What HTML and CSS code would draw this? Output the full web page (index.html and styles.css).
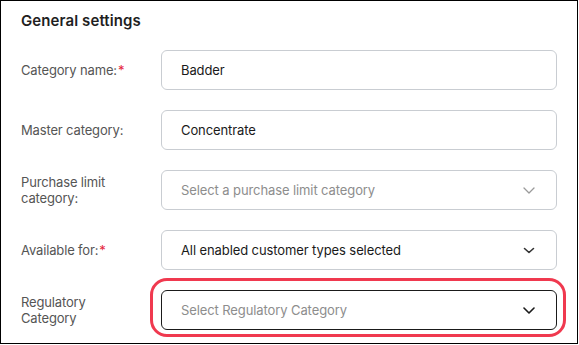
FILE: index.html
```html
<!DOCTYPE html>
<html>
<head>
<meta charset="utf-8">
<link rel="stylesheet" href="styles.css">
</head>
<body>
<div class="panel">
  <h2 class="title">General settings</h2>
  <div class="form">
    <div class="row">
      <label class="label">Category name:<span class="req">*</span></label>
      <div class="field"><span class="value">Badder</span></div>
    </div>
    <div class="row">
      <label class="label">Master category:</label>
      <div class="field"><span class="value">Concentrate</span></div>
    </div>
    <div class="row">
      <label class="label">Purchase limit category:</label>
      <div class="field select"><span class="placeholder">Select a purchase limit category</span>
        <svg class="chev light" width="12" height="7" viewBox="0 0 12 7"><path d="M1 1l5 5 5-5" fill="none" stroke="currentColor" stroke-width="1.3" stroke-linecap="round" stroke-linejoin="round"/></svg>
      </div>
    </div>
    <div class="row">
      <label class="label">Available for:<span class="req">*</span></label>
      <div class="field select"><span class="value">All enabled customer types selected</span>
        <svg class="chev mid" width="12" height="7" viewBox="0 0 12 7"><path d="M1.5 1.5l4.5 4 4.5-4" fill="none" stroke="currentColor" stroke-width="1.6" stroke-linecap="round" stroke-linejoin="round"/></svg>
      </div>
    </div>
    <div class="row">
      <label class="label">Regulatory Category</label>
      <div class="field select active"><span class="placeholder">Select Regulatory Category</span>
        <svg class="chev dark" width="12" height="7" viewBox="0 0 12 7"><path d="M1 1l5 5 5-5" fill="none" stroke="currentColor" stroke-width="1.6" stroke-linecap="round" stroke-linejoin="round"/></svg>
        <span class="highlight"></span>
      </div>
    </div>
  </div>
</div>
</body>
</html>
```
FILE: styles.css
```css
html, body {
  margin: 0;
  padding: 0;
  background: #fff;
}
body {
  font-family: Inter, "Noto Sans", sans-serif;
  color: #1a1a1a;
}
.panel {
  width: 578px;
  height: 344px;
  box-sizing: border-box;
  border: 1px solid #000;
  padding: 10px 20px 0 20px;
  overflow: hidden;
}
.title {
  margin: 0;
  font-size: 15px;
  line-height: 20px;
  font-weight: 600;
  color: #1f1f1f;
  letter-spacing: 0.1px;
}
.form {
  margin-top: 19px;
  display: flex;
  flex-direction: column;
  gap: 20px;
}
.row {
  display: flex;
  align-items: center;
  height: 40px;
}
.label {
  width: 115px;
  flex: none;
  margin-right: 25px;
  font-size: 13px;
  line-height: 16px;
  color: #555;
  letter-spacing: -0.15px;
}
.req {
  color: #e5243b;
  margin-left: 1px;
}
.field {
  position: relative;
  flex: 1;
  height: 40px;
  box-sizing: border-box;
  border: 1px solid #c9cdd2;
  border-radius: 6px;
  display: flex;
  align-items: center;
  padding: 0 20px 0 19px;
  font-size: 13px;
  letter-spacing: -0.1px;
}
.value {
  color: #1a1a1a;
}
.placeholder {
  color: #8d8d8d;
}
.chev {
  margin-left: auto;
  margin-right: 1px;
  display: block;
}
.chev.light { color: #9a9a9a; }
.chev.mid { color: #333; }
.chev.dark { color: #1a1a1a; }
.field.active {
  border-color: #1a1a1a;
}
.highlight {
  position: absolute;
  left: -12px;
  right: -10px;
  top: -13px;
  bottom: -8px;
  border: 3px solid #f0394f;
  border-radius: 17px;
  pointer-events: none;
}
```
